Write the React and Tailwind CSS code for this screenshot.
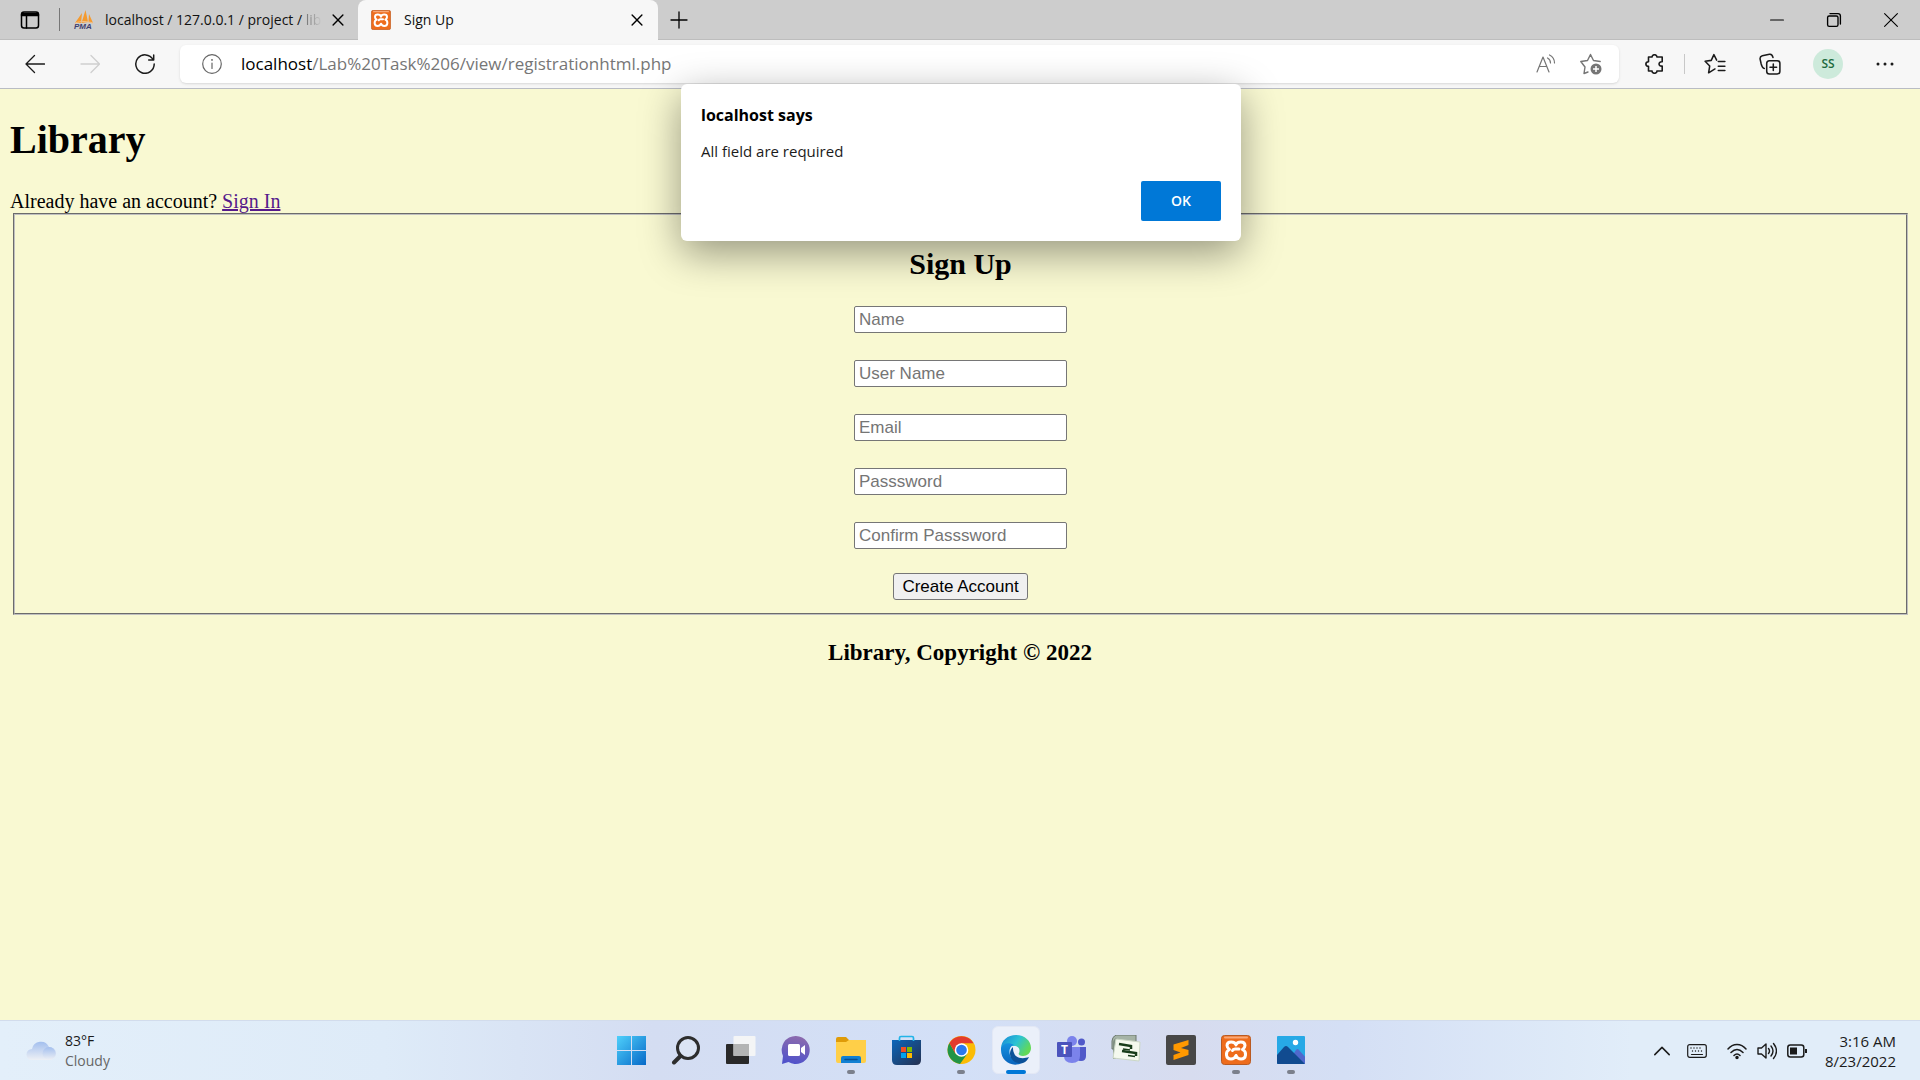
import React from "react";

const line = { fill: "none", stroke: "currentColor", strokeLinecap: "round", strokeLinejoin: "round" };

function Icon({ size = 20, w = 1.3, children, className = "" }) {
  return (
    <svg width={size} height={size} viewBox="0 0 20 20" {...line} strokeWidth={w} className={"shrink-0 " + className} aria-hidden="true">
      {children}
    </svg>
  );
}

function Xampp({ size }) {
  return (
    <svg width={size} height={size} viewBox="0 0 30 30" className="shrink-0" aria-hidden="true">
      <rect x="0.5" y="0.5" width="29" height="29" rx="3" fill="#ee6c1c" stroke="#b95a22" />
      <rect x="3" y="1.5" width="24" height="2" rx="1" fill="#f9a877" />
      <path d="M15 10C14 6 6 5.500 6 10.500c0 2 1 3 2.500 4C4 16.500 4.500 24 10 24c2.500 0 4-1 5-3.500 1 2.500 2.500 3.500 5 3.500 5.500 0 6-7.500 1.500-9.500C23 13.500 24 12.500 24 10.500 24 5.500 16 6 15 10z" fill="none" stroke="#fff" strokeWidth="3" strokeLinejoin="round" />
      <path d="M11.500 15.500C12 14 13 14 14 14h4" fill="none" stroke="#fff" strokeWidth="3" strokeLinecap="round" />
    </svg>
  );
}

function Pma() {
  return (
    <svg width="20" height="20" viewBox="0 0 20 20" className="shrink-0" aria-hidden="true">
      <path d="M1 13 8 3l-1 10zM7.500 13 11.500 0 14 12zM14.500 12l.5-8 4 9z" fill="#f59a2e" />
      <path d="M1 13c6-2 12-2 18 0" stroke="#f5c084" fill="none" />
      <text x="0" y="19" fontSize="8" fontWeight="700" fontStyle="italic" fontFamily="Liberation Sans" fill="#3f3f6e">PMA</text>
    </svg>
  );
}

function TitleBar() {
  return (
    <header className="flex h-10 items-stretch border-b border-[#bdbdbd] bg-[#cdcdcd]">
      <button aria-label="Tab actions" className="flex w-[59px] items-center justify-center">
        <Icon w={1.5}>
          <rect x="1.5" y="2" width="17" height="16" rx="2.5" />
          <path d="M2 4.5h16M2 3.5h16M6.5 6v12" />
          <path d="M2 5h16" strokeWidth="2.5" />
        </Icon>
      </button>
      <div className="my-2 w-px bg-[#777]" />
      <div className="flex w-[298px] items-center pl-[14px] pr-[13px]">
        <Pma />
        <span className="ml-[11px] whitespace-nowrap text-sm text-[#111]">
          localhost / 127.0.0.1 / project / <span className="bg-linear-to-r from-[#777] to-[#c8c8c8] bg-clip-text text-transparent">lib</span>
        </span>
        <button aria-label="Close tab" className="ml-auto">
          <Icon size={14} w={2}><path d="m3 3 14 14M17 3 3 17" /></Icon>
        </button>
      </div>
      <div className="-mb-px flex w-[300px] items-center rounded-t-lg bg-[#f7f7f7] pl-[13px] pr-[14px]">
        <Xampp size={20} />
        <span className="ml-[13px] text-sm text-[#111]">Sign Up</span>
        <button aria-label="Close tab" className="ml-auto">
          <Icon size={14} w={2}><path d="m3 3 14 14M17 3 3 17" /></Icon>
        </button>
      </div>
      <button aria-label="New tab" className="flex w-[42px] items-center justify-center">
        <Icon w={1.3}><path d="M10 2v16M2 10h16" /></Icon>
      </button>
      <div className="ml-auto flex">
        <button aria-label="Minimize" className="flex w-[57px] items-center justify-center"><Icon size={16} w={1.5}><path d="M2 10h16" /></Icon></button>
        <button aria-label="Restore" className="flex w-[57px] items-center justify-center">
          <Icon size={16} w={1.7}><rect x="2" y="5" width="13" height="13" rx="2" /><path d="M5 2h10q3 0 3 3v10" /></Icon>
        </button>
        <button aria-label="Close" className="flex w-[58px] items-center justify-center"><Icon size={16} w={1.4}><path d="m2 2 16 16M18 2 2 18" /></Icon></button>
      </div>
    </header>
  );
}

function Toolbar() {
  return (
    <nav className="flex h-[49px] items-center border-b border-[#b9bcc4] bg-[#f7f7f7] text-[#1b1b1b]">
      <div className="flex w-[180px] items-center gap-[35px] pl-[25px]">
        <button aria-label="Back"><Icon size={20}><path d="M19.500 10H1M9.500 1.500 1 10l8.500 8.500" /></Icon></button>
        <button aria-label="Forward" className="text-[#cfcfcf]"><Icon size={20}><path d="M1 10h18.500M11 1.500 19.500 10 11 18.500" /></Icon></button>
        <button aria-label="Refresh"><Icon size={20} w={1.5}><path d="M18 5.500A9.200 9.200 0 1 0 19.200 10M18.700 1v5h-5" /></Icon></button>
      </div>
      <div className="flex h-[38px] flex-1 items-center rounded-md bg-white pl-[22px] pr-[17px] shadow-sm">
        <Icon className="text-[#666]" w={1.2}><circle cx="10" cy="10" r="9.300" /><path d="M10 9v5.500" /><path d="M10 5.800v.1" strokeWidth="1.8" /></Icon>
        <a href="#address" className="ml-[19px] text-[17px] text-[#767676]"><span className="text-black">localhost</span>/Lab%20Task%206/view/registrationhtml.php</a>
        <button aria-label="Read aloud" className="ml-auto text-[#757575]">
          <Icon size={20} w={1.200}><path d="M1 18 7 3l6 15M3.200 12.500h7.600M11.500 4c2 1 3 2.500 3 5M13.500 1c3 1.500 5 4 5 8" /></Icon>
        </button>
        <button aria-label="Add to favorites" className="ml-6 text-[#757575]">
          <svg width="22" height="22" viewBox="0 0 22 22" aria-hidden="true">
            <path d="M8 19 4 20.500 5 14 .8 8.500 7.500 7.500 10.500 1.500l3 6 6.700 1" {...line} strokeWidth="1.400" />
            <circle cx="16" cy="16" r="5.500" fill="#757575" />
            <path d="M16 13v6M13 16h6" stroke="#fff" strokeWidth="1.500" />
          </svg>
        </button>
      </div>
      <div className="flex w-[301px] items-center pl-[26px]">
        <button aria-label="Extensions">
          <Icon size={20} w={1.600}><path d="M3.500 3h3.600c-.2-3 5-3 4.800 0h5.300v4.800c-4.200-.7-4.200 5 0 4.300V17h-5.300c.2 3-5 3-4.800 0H3.500v-4.700c-3.500 0-3.500-4.600 0-4.600z" /></Icon>
        </button>
        <div className="ml-[19px] h-5 w-px bg-[#c8c8c8]" />
        <button aria-label="Favorites" className="ml-[19px]">
          <Icon size={22} w={1.400}><path d="M10 14.500 4.200 18l1-6.200L1 7.500 6.600 6.700 9 1.500l2.500 5M13 7.700h6M13 12h6M13 16h6" /></Icon>
        </button>
        <button aria-label="Collections" className="ml-[33px]">
          <Icon size={22} w={1.400}><rect x="7" y="7" width="12" height="12" rx="2.500" /><path d="M13 10v6M10 13h6M4.800 14C3 13.800 2.500 12 2 10L1 5.500C.8 4 1.500 3 3 2.600l6.500-1.500c1.700-.3 2.700.5 3.200 2.900" /></Icon>
        </button>
        <button aria-label="Profile" className="ml-8 flex size-[30px] items-center justify-center rounded-full bg-[#cdeadb] text-xs font-semibold text-[#1d6a40]">SS</button>
        <button aria-label="Settings and more" className="ml-8">
          <svg width="20" height="20" viewBox="0 0 20 20" fill="currentColor" aria-hidden="true"><circle cx="3" cy="10" r="1.500" /><circle cx="10" cy="10" r="1.500" /><circle cx="17" cy="10" r="1.500" /></svg>
        </button>
      </div>
    </nav>
  );
}

const fields = [
  ["name", "Name", "text"],
  ["username", "User Name", "text"],
  ["email", "Email", "text"],
  ["password", "Passsword", "password"],
  ["confirm", "Confirm Passsword", "password"],
];

function Page() {
  return (
    <main className="flex-1 bg-[#f9f9d2] px-[10px] pt-7 font-['Liberation_Serif',serif] text-xl leading-[23px] text-black">
      <h1 className="text-[40px] leading-[46px] font-bold">Library</h1>
      <p className="mt-[27px]">Already have an account? <a href="#signin" className="text-[#551a8b] underline">Sign In</a></p>
      <form className="ml-[3px] mr-[2px] flex flex-col items-center border-2 border-[#c0c0c0] [border-style:groove] pt-8 pb-[13px]">
        <h2 className="text-[30px] leading-[34px] font-bold">Sign Up</h2>
        <div className="mt-[25px] flex flex-col gap-[27px]">
          {fields.map(([id, label, type]) => (
            <input key={id} id={id} type={type} aria-label={label} placeholder={label} className="h-[27px] w-[213px] rounded-xs border border-[#767676] bg-white px-1 font-['Liberation_Sans',sans-serif] text-[17px] placeholder:text-[#757575]" />
          ))}
        </div>
        <button type="button" className="mt-6 h-[27px] rounded-[3px] border border-[#767676] bg-[#f0f0f0] px-2 font-['Liberation_Sans',sans-serif] text-[17px] leading-5">Create Account</button>
      </form>
      <h3 className="mt-6 text-center text-[23px] leading-[27px] font-bold">Library, Copyright © 2022</h3>
    </main>
  );
}

function Dialog() {
  return (
    <section role="dialog" aria-label="localhost says" className="absolute top-[84px] left-1/2 ml-px w-[560px] -translate-x-1/2 rounded-md bg-white px-5 pt-[19px] pb-5 shadow-[0_12px_40px_rgba(0,0,0,0.4)]">
      <h2 className="text-base leading-6 font-bold text-black">localhost says</h2>
      <p className="mt-3 text-[15px] leading-6 text-[#1b1b1b]">All field are required</p>
      <div className="mt-[18px] flex justify-end">
        <button className="h-10 w-20 rounded-xs bg-[#0078d7] text-sm font-semibold text-white">OK</button>
      </div>
    </section>
  );
}

function Svg({ children }) {
  return <svg width="30" height="30" viewBox="0 0 30 30" aria-hidden="true">{children}</svg>;
}

const apps = [
  { name: "Start", icon: <Svg><defs><linearGradient id="win" x1="0" y1="0" x2="1" y2="1"><stop stopColor="#4fd0fb" /><stop offset="1" stopColor="#0669c8" /></linearGradient></defs><path d="M1 1h14v14H1zM16 1h14v14H16zM1 16h14v14H1zM16 16h14v14H16z" fill="url(#win)" /></Svg> },
  { name: "Search", icon: <Svg><circle cx="17" cy="13" r="10.500" fill="#dbe4f4" stroke="#2d2d2d" strokeWidth="3" /><path d="m9.500 21-6.500 6.500" stroke="#2d2d2d" strokeWidth="4" strokeLinecap="round" /></Svg> },
  { name: "Task View", icon: <Svg><rect x="0" y="9" width="23" height="20" rx="1" fill="#292929" /><rect x="7.500" y="1" width="22" height="20" rx="1" fill="#f6f6f6" opacity=".95" /><path d="M7.500 9H23v12H7.500z" fill="#b3b4b4" /></Svg> },
  { name: "Chat", icon: <Svg><defs><linearGradient id="chat" x1=".6" y1="0" x2=".4" y2="1"><stop stopColor="#8d6bad" /><stop offset="1" stopColor="#4f52cb" /></linearGradient></defs><path d="M15 1a14 14 0 1 1-7.500 26L1 29l1-8A14 14 0 0 1 15 1z" fill="url(#chat)" /><rect x="7" y="9" width="12" height="12" rx="1.500" fill="#fff" /><path d="m20 13 4-3v10l-4-3z" fill="#fff" /></Svg> },
  { name: "File Explorer", open: true, icon: <Svg><path d="M0 4q0-2 2-2h8l3 3h15q2 0 2 2v5H0z" fill="#df9b08" /><path d="M0 7h10l3-2h17v21q0 2-2 2H2q-2 0-2-2z" fill="#ffcf48" /><path d="M5 28v-5q0-2 2-2h16q2 0 2 2v5z" fill="#1180d3" /><path d="M9 24.500h12" stroke="#0a4f91" strokeWidth="1.500" strokeLinecap="round" /></Svg> },
  { name: "Microsoft Store", icon: <Svg><defs><linearGradient id="store" x1="0" y1="0" x2="1" y2="1"><stop stopColor="#0b66bb" /><stop offset="1" stopColor="#25304f" /></linearGradient></defs><path d="M1 5h29v20q0 5-5 5H6q-5 0-5-5z" fill="url(#store)" /><path d="M8.500 6V3q0-1.500 1.500-1.500h11q1.500 0 1.500 1.500v3" fill="none" stroke="#22b4e8" strokeWidth="1.700" /><path d="M10 12h5v5h-5z" fill="#f25022" /><path d="M16 12h5v5h-5z" fill="#7fba00" /><path d="M10 18h5v5h-5z" fill="#00a4ef" /><path d="M16 18h5v5h-5z" fill="#ffb900" /></Svg> },
  { name: "Chrome", open: true, icon: <Svg><circle cx="15.500" cy="15" r="14" fill="#fbbc05" /><path d="M3.400 8A14 14 0 0 0 14 28.900L21.500 18.500 9.400 18.500z" fill="#219447" /><path d="M15.500 8.200h12.100a14 14 0 0 0-24.200-.2l6 10.500z" fill="#e33b2e" /><circle cx="15.500" cy="15" r="6.800" fill="#fff" /><circle cx="15.500" cy="15" r="5.300" fill="#2a79ee" /></Svg> },
  { name: "Edge", active: true, icon: <Svg><defs><linearGradient id="e1" x1="0" y1="0" x2="1" y2=".5"><stop stopColor="#1684d8" /><stop offset=".55" stopColor="#2cc3d4" /><stop offset="1" stopColor="#62d957" /></linearGradient><linearGradient id="e2" x1="0" y1="0" x2="0" y2="1"><stop stopColor="#1692df" /><stop offset="1" stopColor="#0964bd" /></linearGradient></defs><path d="M0 14C0 5 7 0 15 0c9 0 15 6 15 13 0 5-4 8-8 8-4 0-5-2-4-3 1-2 1-7-5-7-7 0-12 2-13 3z" fill="url(#e1)" /><path d="M0 13c2-5 8-6 13-3-7 1-7 17 8 18-10 5-21-2-21-13z" fill="url(#e2)" /><path d="M12 12c-7 7-1 18 10 16 3-1 5-4 6-6-5 2-13 2-15-4-1-2-1-4-1-6z" fill="#0b5199" /></Svg> },
  { name: "Teams", icon: <Svg><circle cx="16" cy="6" r="5" fill="#7b83eb" /><circle cx="25.500" cy="7" r="3.500" fill="#5059c9" /><path d="M20 12h10v9q0 5-5 5-5 0-5-5z" fill="#5059c9" /><path d="M8 12h16v9q0 7-8 7-8 0-8-7z" fill="#7b83eb" /><rect x="1" y="7" width="15" height="15" rx="1" fill="#4b53bc" /><text x="8.500" y="19" textAnchor="middle" fontSize="12" fontWeight="700" fontFamily="Open Sans" fill="#fff">T</text></Svg> },
  { name: "Editor", icon: <Svg><path d="M5 0h20v14H1V6q0-4 4-6z" fill="#a5b3a6" stroke="#6a776c" /><path d="M2 24V8q0-4 4-5l-1 21z" fill="#7f8f81" /><path d="m5 4 24 3-1 19-26-3z" fill="#f4f9ee" stroke="#cbd7c6" /><path d="m8 9 12 2v3M11 16l14 2v3" fill="none" stroke="#173c1a" strokeWidth="2.500" /><path d="m12 14 7 1M17 20.500l7 1" stroke="#173c1a" strokeWidth="1.500" /></Svg> },
  { name: "Sublime Text", icon: <Svg><rect width="30" height="30" rx="2" fill="#474747" /><path d="m7.500 9.500 15-4.500v5l-7.500 3 7.500 2v5l-15 5v-5l7-2.500-7-2.500z" fill="#ff9800" /></Svg> },
  { name: "XAMPP", open: true, icon: <Xampp size={30} /> },
  { name: "Photos", open: true, icon: <Svg><defs><clipPath id="photo"><rect x="1" y="1" width="28" height="28" rx="1" /></clipPath></defs><g clipPath="url(#photo)"><path d="M1 1h28v28H1z" fill="#27a9e6" /><path d="M11 29 20 15q1.500-2 3 0l7 8v6z" fill="#5069cd" /><path d="M1 20 8 12q2-2 4 0l17 17H1z" fill="#114b90" /><circle cx="19.500" cy="7.500" r="2.700" fill="#fff" /></g></Svg> },
];

function Taskbar() {
  return (
    <footer className="grid h-[60px] grid-cols-[1fr_auto_1fr] border-t border-[#d2dcec] bg-[linear-gradient(90deg,#e3effa_0%,#deebf8_20%,#d4ddf2_34%,#d3e0f7_50%,#d7dcef_62%,#d4dff5_70%,#e1edf9_85%,#e1edf9_100%)]">
      <button className="flex items-center gap-[9px] pl-[26px] text-left">
        <svg width="30" height="20" viewBox="0 0 30 20" aria-hidden="true">
          <defs><linearGradient id="cl" x1="0" y1="0" x2="0" y2="1"><stop stopColor="#a3bfee" /><stop offset="1" stopColor="#edf0f5" /></linearGradient></defs>
          <path d="M6 19a5.500 5.500 0 0 1 0-11 9 9 0 0 1 17-2 6.500 6.500 0 0 1 1 13z" fill="url(#cl)" /><circle cx="23" cy="12.500" r="6.500" fill="url(#cl)" />
        </svg>
        <span className="text-sm leading-5 text-[#666]"><span className="block text-[#1b1b1b]">83°F</span>Cloudy</span>
      </button>
      <div className="flex items-start gap-[7px] pt-[5px] pl-px">
        {apps.map((a) => (
          <button key={a.name} aria-label={a.name} className={a.active ? "relative flex size-12 items-center justify-center rounded-md border border-[#e3e8f5] bg-[#ebf0fa]" : "relative flex size-12 items-center justify-center"}>
            {a.icon}
            {a.open && <span className="absolute bottom-0 h-1 w-2 rounded-full bg-[#7b808c]" />}
            {a.active && <span className="absolute -bottom-px h-1 w-5 rounded-full bg-[#0078d7]" />}
          </button>
        ))}
      </div>
      <div className="flex items-center justify-end pr-6 text-[#1b1b1b]">
        <button aria-label="Show hidden icons"><Icon size={18} w={1.700}><path d="m2 14 8-8 8 8" /></Icon></button>
        <button aria-label="Touch keyboard" className="ml-4">
          <svg width="20" height="14" viewBox="0 0 20 14" {...line} strokeWidth="1.200" aria-hidden="true"><rect x=".7" y=".7" width="18.600" height="12.600" rx="2" /><path d="M4.500 10.500h11" /><path d="M4 4h12M5.500 7h10" strokeWidth="1.400" strokeDasharray="0 3" /></svg>
        </button>
        <button aria-label="Network, volume and battery" className="ml-5 flex items-center gap-[10px]">
          <Icon size={20} w={1.500}><path d="M1 8c5-6 13-6 18 0M4 11.500c4-4 8-4 12 0M7 14.500c2-2 4-2 6 0" /><circle cx="10" cy="16.500" r="1" fill="currentColor" /></Icon>
          <Icon size={20} w={1.400}><path d="M1 7h3.500L9 3v14l-4.500-4H1zM11.500 7.500q2 2.500 0 5M14 5q4 5 0 10M16.500 2.500q6 7.500 0 15" /></Icon>
          <svg width="20" height="14" viewBox="0 0 20 14" aria-hidden="true"><rect x=".8" y="1" width="16" height="12" rx="2.500" {...line} strokeWidth="1.500" /><path d="M3 3.500h7v7H3zM18 5h2v4h-2z" fill="currentColor" /></svg>
        </button>
        <div className="ml-[18px] text-right text-[15px] leading-5">3:16 AM<br />8/23/2022</div>
      </div>
    </footer>
  );
}

export default function App() {
  return (
    <div className="relative flex min-h-screen flex-col overflow-hidden font-['Open_Sans',sans-serif]">
      <TitleBar />
      <Toolbar />
      <Page />
      <Taskbar />
      <Dialog />
    </div>
  );
}
